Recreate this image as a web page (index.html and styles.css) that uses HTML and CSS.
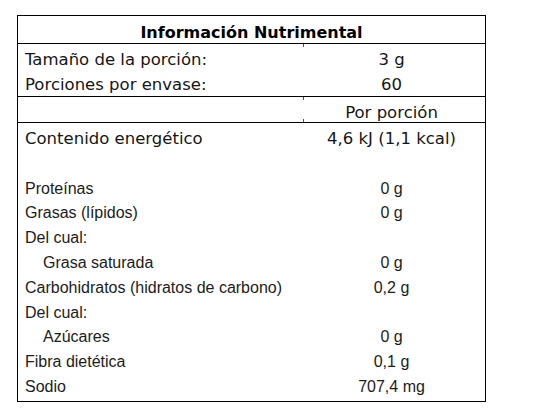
FILE: index.html
```html
<!DOCTYPE html>
<html lang="es">
<head>
<meta charset="utf-8">
<title>Información Nutrimental</title>
<link rel="stylesheet" href="styles.css">
</head>
<body>
<div class="panel">
  <div class="title tick-below">Información Nutrimental</div>
  <div class="sec sec-top tick-below">
    <div class="row"><span class="k">Tamaño de la porción:</span><span class="v">3 g</span></div>
    <div class="row"><span class="k">Porciones por envase:</span><span class="v">60</span></div>
  </div>
  <div class="sec sec-head tick-above">
    <div class="row"><span class="k"></span><span class="v">Por porción</span></div>
  </div>
  <div class="sec sec-body tick-below">
    <div class="row verd"><span class="k">Contenido energético</span><span class="v">4,6 kJ (1,1 kcal)</span></div>
    <div class="row"><span class="k"></span><span class="v"></span></div>
    <div class="row"><span class="k">Proteínas</span><span class="v">0 g</span></div>
    <div class="row"><span class="k">Grasas (lípidos)</span><span class="v">0 g</span></div>
    <div class="row"><span class="k">Del cual:</span><span class="v"></span></div>
    <div class="row"><span class="k ind">Grasa saturada</span><span class="v">0 g</span></div>
    <div class="row"><span class="k">Carbohidratos (hidratos de carbono)</span><span class="v">0,2 g</span></div>
    <div class="row"><span class="k">Del cual:</span><span class="v"></span></div>
    <div class="row"><span class="k ind">Azúcares</span><span class="v">0 g</span></div>
    <div class="row"><span class="k">Fibra dietética</span><span class="v">0,1 g</span></div>
    <div class="row"><span class="k">Sodio</span><span class="v">707,4 mg</span></div>
  </div>
</div>
</body>
</html>
```

FILE: styles.css
```css
html, body {
  margin: 0;
  padding: 0;
  background: #fff;
}
body {
  padding: 15px 0 0 17px;
}
.panel {
  width: 467px;
  border: 1px solid #000;
  color: #151515;
}
.sec, .title {
  box-sizing: border-box;
  position: relative;
}
.tick-below::after,
.tick-above::after {
  content: "";
  position: absolute;
  left: 285px;
  width: 1px;
  height: 3px;
  background: #555;
}
.tick-below::after {
  bottom: -4px;
}
.sec-body.tick-below::after {
  bottom: -5px;
}
.tick-above::after {
  bottom: 0;
}
.title {
  height: 28px;
  padding-top: 6px;
  border-bottom: 1px solid #000;
  font-family: "DejaVu Sans", Verdana, sans-serif;
  font-weight: bold;
  font-size: 16px;
  line-height: 22px;
  text-align: center;
  color: #000;
}
.sec-top {
  height: 53px;
  padding-top: 4px;
  border-bottom: 1px solid #000;
  font-family: "DejaVu Sans", Verdana, sans-serif;
  font-size: 16.5px;
}
.sec-top .row {
  height: 24.5px;
  line-height: 24.5px;
}
.sec-head {
  height: 26px;
  padding-top: 4px;
  border-bottom: 1px solid #000;
  font-family: "DejaVu Sans", Verdana, sans-serif;
  font-size: 16.5px;
}
.sec-head .row {
  line-height: 24px;
}
.sec-body {
  font-family: "Liberation Sans", Arial, sans-serif;
  font-size: 16px;
  padding-top: 4px;
  padding-bottom: 1px;
}
.sec-body .row {
  height: 24.8px;
  line-height: 24.8px;
  color: #1c1c1c;
}
.sec-body .row.verd {
  font-family: "DejaVu Sans", Verdana, sans-serif;
  font-size: 16.5px;
  color: #151515;
}
.row {
  display: grid;
  grid-template-columns: 280px 1fr;
}
.k {
  padding-left: 7px;
  white-space: nowrap;
}
.k.ind {
  padding-left: 25px;
}
.v {
  text-align: center;
  white-space: nowrap;
}
```
